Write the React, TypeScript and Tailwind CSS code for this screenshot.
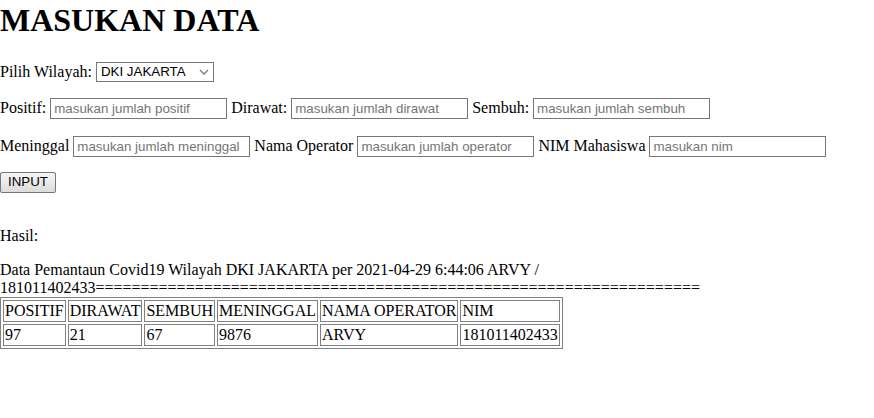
import React from "react";

const serif = { fontFamily: '"Liberation Serif", "Times New Roman", serif' };

function Field({ label, placeholder }: { label: string; placeholder: string }) {
  return (
    <>
      <span>{label}</span>
      <input
        type="text"
        placeholder={placeholder}
        className="w-[177px] h-[21px] border border-[#767676] bg-white px-[3px] py-[1px] text-[13.333px] font-['Liberation_Sans',Arial,sans-serif] text-black placeholder:text-[#757575] outline-none"
      />
    </>
  );
}

export default function App() {
  const eq = "=".repeat(67);
  const headers = ["POSITIF", "DIRAWAT", "SEMBUH", "MENINGGAL", "NAMA OPERATOR", "NIM"];
  const values = ["97", "21", "67", "9876", "ARVY", "181011402433"];
  return (
    <div className="bg-white text-black text-[16px] leading-[normal] w-[874px] h-[418px] overflow-hidden" style={serif}>
      <h1 className="text-[32px] font-bold leading-[37px] mt-[2px] mb-[22px]">MASUKAN DATA</h1>

      <div className="flex items-center h-[22px] gap-[4px]">
        <span>Pilih Wilayah:</span>
        <div className="relative w-[118px] h-[20px] border border-[#767676] bg-white">
          <span className="absolute left-[4px] top-[1px] text-[13.333px] leading-[16px] font-['Liberation_Sans',Arial,sans-serif]">
            DKI JAKARTA
          </span>
          <svg className="absolute right-[4px] top-[6px]" width="10" height="6" viewBox="0 0 10 6">
            <path d="M1 1 L5 5 L9 1" fill="none" stroke="#7a7a7a" strokeWidth="1.3" />
          </svg>
        </div>
      </div>

      <div className="flex items-center h-[22px] gap-[4px] mt-[14px]">
        <Field label="Positif:" placeholder="masukan jumlah positif" />
        <Field label="Dirawat:" placeholder="masukan jumlah dirawat" />
        <Field label="Sembuh:" placeholder="masukan jumlah sembuh" />
      </div>

      <div className="flex items-center h-[22px] gap-[4px] mt-[16px]">
        <Field label="Meninggal" placeholder="masukan jumlah meninggal" />
        <Field label="Nama Operator" placeholder="masukan jumlah operator" />
        <Field label="NIM Mahasiswa" placeholder="masukan nim" />
      </div>

      <div className="flex items-center h-[22px] mt-[14px]">
        <button className="w-[56px] h-[21px] border border-[#767676] rounded-[2px] bg-linear-to-b from-[#f6f6f6] to-[#dcdcdc] text-[13.333px] font-['Liberation_Sans',Arial,sans-serif] leading-[18px]">
          INPUT
        </button>
      </div>

      <p className="mt-[34px] leading-[18px]">Hasil:</p>

      <div className="mt-[16px] leading-[18px]">
        Data Pemantaun Covid19 Wilayah DKI JAKARTA per 2021-04-29 6:44:06 ARVY / 181011402433{eq}
      </div>

      <table className="border border-[#808080] border-separate border-spacing-[2px] leading-[18px]">
        <tbody>
          <tr>
            {headers.map((h) => (
              <td key={h} className="border border-[#808080] p-[1px] text-left">
                {h}
              </td>
            ))}
          </tr>
          <tr>
            {values.map((v, i) => (
              <td key={i} className="border border-[#808080] p-[1px] text-left">
                {v}
              </td>
            ))}
          </tr>
        </tbody>
      </table>
    </div>
  );
}
